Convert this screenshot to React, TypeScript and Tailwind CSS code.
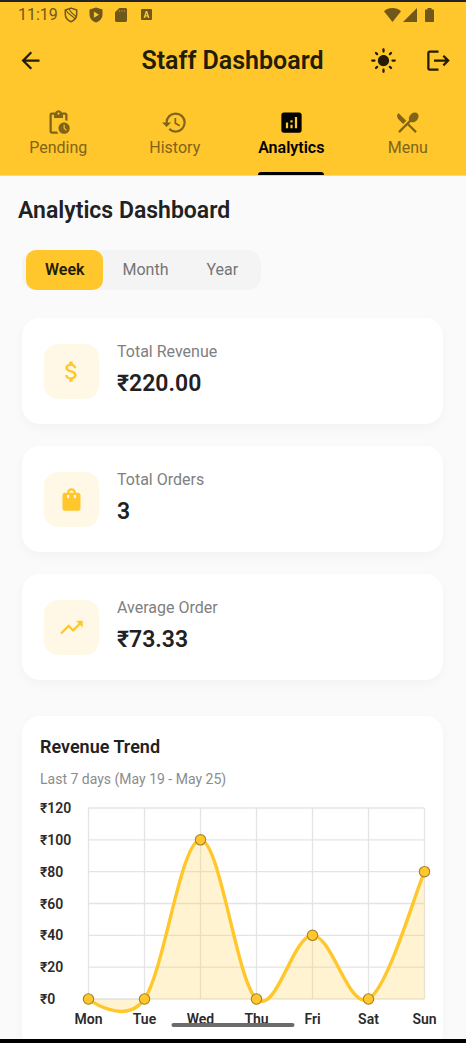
import { useState } from "react";
import type { ReactNode } from "react";
import {
  MdAnalytics,
  MdArrowBack,
  MdAttachMoney,
  MdHistory,
  MdLightMode,
  MdLogout,
  MdPendingActions,
  MdRestaurantMenu,
  MdShoppingBag,
  MdTrendingUp,
} from "react-icons/md";

function StatusBar() {
  return (
    <div className="flex h-[25px] items-center justify-between pl-[18px] pr-8 text-[#70571a]">
      <div className="flex items-center">
        <span className="w-[46px] text-base">11:19</span>
        <svg width="14" height="16" viewBox="0 0 14 16" fill="none" stroke="currentColor" strokeWidth="1.5" aria-hidden="true">
          <path d="M7 1.1 12.7 3v4.3c0 3.4-2.3 6.2-5.7 7.4C3.6 13.5 1.3 10.700 1.300 7.300V3z" strokeLinejoin="round" />
          <path d="M2 2.800C3.500 7.500 9 8 11 12.200M5.500 2 C5.500 5 9 6.500 12 9.500" strokeWidth="1.1" />
        </svg>
        <svg className="ml-[11px]" width="14" height="16" viewBox="0 0 14 16" fill="currentColor" aria-hidden="true">
          <path fillRule="evenodd" d="M7 .4 13.500 2.600v4.900c0 3.700-2.700 6.900-6.500 8.100C3.200 14.400.500 11.200.500 7.500V2.600zM4.900 4.600v6.200L10 7.700z" />
        </svg>
        <svg className="ml-3" width="12" height="14" viewBox="0 0 12 14" fill="currentColor" aria-hidden="true">
          <path d="M4.300 0H10.600C11.300 0 12 .6 12 1.400V12.600c0 .8-.6 1.400-1.400 1.400H1.400C.6 14 0 13.400 0 12.600V4.300z" />
          <path d="M4.600 2v2M7 2v2M9.400 2v2" stroke="#b08a20" strokeWidth="1" />
        </svg>
        <svg className="ml-[14px]" width="11" height="11" viewBox="0 0 11 11" fill="currentColor" aria-hidden="true">
          <path fillRule="evenodd" d="M1 0h9a1 1 0 0 1 1 1v9a1 1 0 0 1-1 1H1a1 1 0 0 1-1-1V1a1 1 0 0 1 1-1zM4.800 2 2.500 9h1.600l.5-1.500h1.800L6.900 9h1.600L6.200 2zM5.500 4 6.100 6.200H4.900z" />
        </svg>
      </div>
      <div className="flex items-center">
        <svg width="17" height="14" viewBox="0 0 17 14" fill="currentColor" aria-hidden="true">
          <path d="M8.500 14 0 3.200C2.300 1.100 5.200 0 8.500 0s6.200 1.100 8.500 3.200z" />
        </svg>
        <svg className="ml-0.5" width="14" height="14" viewBox="0 0 14 14" fill="currentColor" aria-hidden="true">
          <path d="M14 0v14H0z" />
        </svg>
        <svg className="ml-2" width="9" height="14" viewBox="0 0 9 14" fill="currentColor" aria-hidden="true">
          <path d="M2.500 0h4v1.400H8c.6 0 1 .4 1 1V13c0 .6-.4 1-1 1H1c-.6 0-1-.4-1-1V2.400c0-.6.400-1 1-1h1.500z" />
        </svg>
      </div>
    </div>
  );
}

const tabs = [
  { name: "Pending", Icon: MdPendingActions },
  { name: "History", Icon: MdHistory },
  { name: "Analytics", Icon: MdAnalytics },
  { name: "Menu", Icon: MdRestaurantMenu },
];

function Header() {
  const [active, setActive] = useState("Analytics");
  return (
    <header className="shrink-0 border-b border-[#d8d8d8] bg-[#ffc72c]">
      <StatusBar />
      <div className="flex h-[67px] items-center justify-between pl-[17px] pr-[14px] text-[#231d06]">
        <div className="w-[78px]">
          <button type="button" aria-label="Back" className="block">
            <MdArrowBack size={27} />
          </button>
        </div>
        <h1 className="whitespace-nowrap text-[25px] font-semibold">Staff Dashboard</h1>
        <div className="flex w-[82px] justify-between">
          <button type="button" aria-label="Light mode">
            <MdLightMode size={27} />
          </button>
          <button type="button" aria-label="Log out">
            <MdLogout size={27} />
          </button>
        </div>
      </div>
      <nav className="grid h-[81px] grid-cols-4">
        {tabs.map(({ name, Icon }) => {
          const on = name === active;
          return (
            <button
              key={name}
              type="button"
              onClick={() => setActive(name)}
              className={
                on
                  ? "flex flex-col items-center justify-between pt-[15px] font-semibold text-black"
                  : "flex flex-col items-center justify-between pt-[15px] text-[#80641a]"
              }
            >
              <span className="flex flex-col items-center">
                <Icon size={27} />
                <span className="text-base leading-6">{name}</span>
              </span>
              <span className={on ? "h-[3px] w-[66px] rounded-t bg-black" : "h-[3px] w-[66px]"} />
            </button>
          );
        })}
      </nav>
    </header>
  );
}

function StatCard({ label, value, icon }: { label: string; value: string; icon: ReactNode }) {
  return (
    <section className="flex h-[106px] items-center gap-[18px] rounded-[18px] bg-white px-[22px] shadow-[0_4px_11px_rgba(0,0,0,0.03)]">
      <div className="flex size-[55px] items-center justify-center rounded-[14px] bg-[#fff8e7] text-[#ffc72c]">{icon}</div>
      <div>
        <h3 className="text-base leading-6 text-[#808080]">{label}</h3>
        <p className="mt-0.5 text-[23px] font-semibold leading-9 text-[#212121]">{value}</p>
      </div>
    </section>
  );
}

const days = ["Mon", "Tue", "Wed", "Thu", "Fri", "Sat", "Sun"];
const revenue = [0, 0, 100, 0, 40, 0, 80];
const ticks = [120, 100, 80, 60, 40, 20, 0];
const px = (i: number) => 48.5 + i * 56;
const py = (v: number) => 200 - (v * 191) / 120;

function curve() {
  const pts = revenue.map((v, i) => [px(i), py(v)]);
  let d = `M${pts[0][0]} ${pts[0][1]}`;
  let tx = 0;
  let ty = 0;
  for (let i = 1; i < pts.length; i++) {
    const prev = pts[i - 1];
    const cur = pts[i];
    const next = pts[Math.min(i + 1, pts.length - 1)];
    const c1 = [prev[0] + tx, prev[1] + ty];
    tx = ((next[0] - prev[0]) / 2) * 0.35;
    ty = ((next[1] - prev[1]) / 2) * 0.35;
    d += ` C${c1[0]} ${c1[1]} ${cur[0] - tx} ${cur[1] - ty} ${cur[0]} ${cur[1]}`;
  }
  return d;
}

function RevenueChart() {
  const line = curve();
  return (
    <svg viewBox="0 0 403 232" className="block h-auto w-full" role="img" aria-label="Revenue per day">
      <g stroke="#e4e4e4" strokeWidth="1.3">
        {ticks.map((t) => (
          <line key={t} x1={px(0)} x2={px(6)} y1={py(t)} y2={py(t)} />
        ))}
        {days.map((d, i) => (
          <line key={d} x1={px(i)} x2={px(i)} y1={py(120)} y2={py(0)} />
        ))}
      </g>
      <path d={`${line} L${px(6)} ${py(0)} L${px(0)} ${py(0)} Z`} fill="#ffc72c" fillOpacity="0.22" />
      <path d={line} fill="none" stroke="#ffc72c" strokeWidth="3.4" strokeLinecap="round" />
      {revenue.map((v, i) => (
        <circle key={days[i]} cx={px(i)} cy={py(v)} r="5.2" fill="#ffc72c" stroke="#a5822a" strokeWidth="1.1" />
      ))}
      <g className="fill-[#2b2b2b] text-sm font-semibold">
        {ticks.map((t) => (
          <text key={t} x="0" y={py(t) + 5}>
            ₹{t}
          </text>
        ))}
        {days.map((d, i) => (
          <text key={d} x={px(i)} y="225" textAnchor="middle">
            {d}
          </text>
        ))}
      </g>
    </svg>
  );
}

const ranges = ["Week", "Month", "Year"];

export default function App() {
  const [range, setRange] = useState("Week");
  return (
    <div className="relative flex h-screen flex-col overflow-hidden border-b-4 border-t-2 border-b-black border-t-[#20242a] bg-[#fafafa] font-['Roboto',sans-serif]">
      <Header />
      <main className="min-h-0 flex-1 overflow-y-auto pb-6 pl-[22px] pr-[23px] [scrollbar-width:none]">
        <h2 className="-ml-1 mt-[19px] text-[23px] font-semibold leading-8 text-[#212121]">Analytics Dashboard</h2>
        <div className="mt-[23px] flex w-fit rounded-[14px] bg-[#f4f4f4] px-1">
          {ranges.map((r) => (
            <button
              key={r}
              type="button"
              onClick={() => setRange(r)}
              className={
                r === range
                  ? "h-10 rounded-[10px] bg-[#ffc72c] px-[19px] text-base font-semibold text-[#231d06]"
                  : "h-10 px-[19px] text-base text-[#757575]"
              }
            >
              {r}
            </button>
          ))}
        </div>
        <div className="mt-7 flex flex-col gap-[22px]">
          <StatCard label="Total Revenue" value="₹220.00" icon={<MdAttachMoney size={27} />} />
          <StatCard label="Total Orders" value="3" icon={<MdShoppingBag size={27} />} />
          <StatCard label="Average Order" value="₹73.33" icon={<MdTrendingUp size={27} />} />
        </div>
        <section className="mt-9 rounded-[18px] bg-white pb-5 pl-[18px] pt-[19px] shadow-[0_4px_11px_rgba(0,0,0,0.03)]">
          <h3 className="text-lg font-semibold leading-6 text-[#212121]">Revenue Trend</h3>
          <p className="mt-[10px] text-sm leading-5 text-[#8c8c8c]">Last 7 days (May 19 - May 25)</p>
          <div className="mt-[10px]">
            <RevenueChart />
          </div>
        </section>
      </main>
      <div className="absolute bottom-3 left-1/2 h-1 w-[123px] -translate-x-1/2 rounded-full bg-[#6b6b6b]" />
    </div>
  );
}
